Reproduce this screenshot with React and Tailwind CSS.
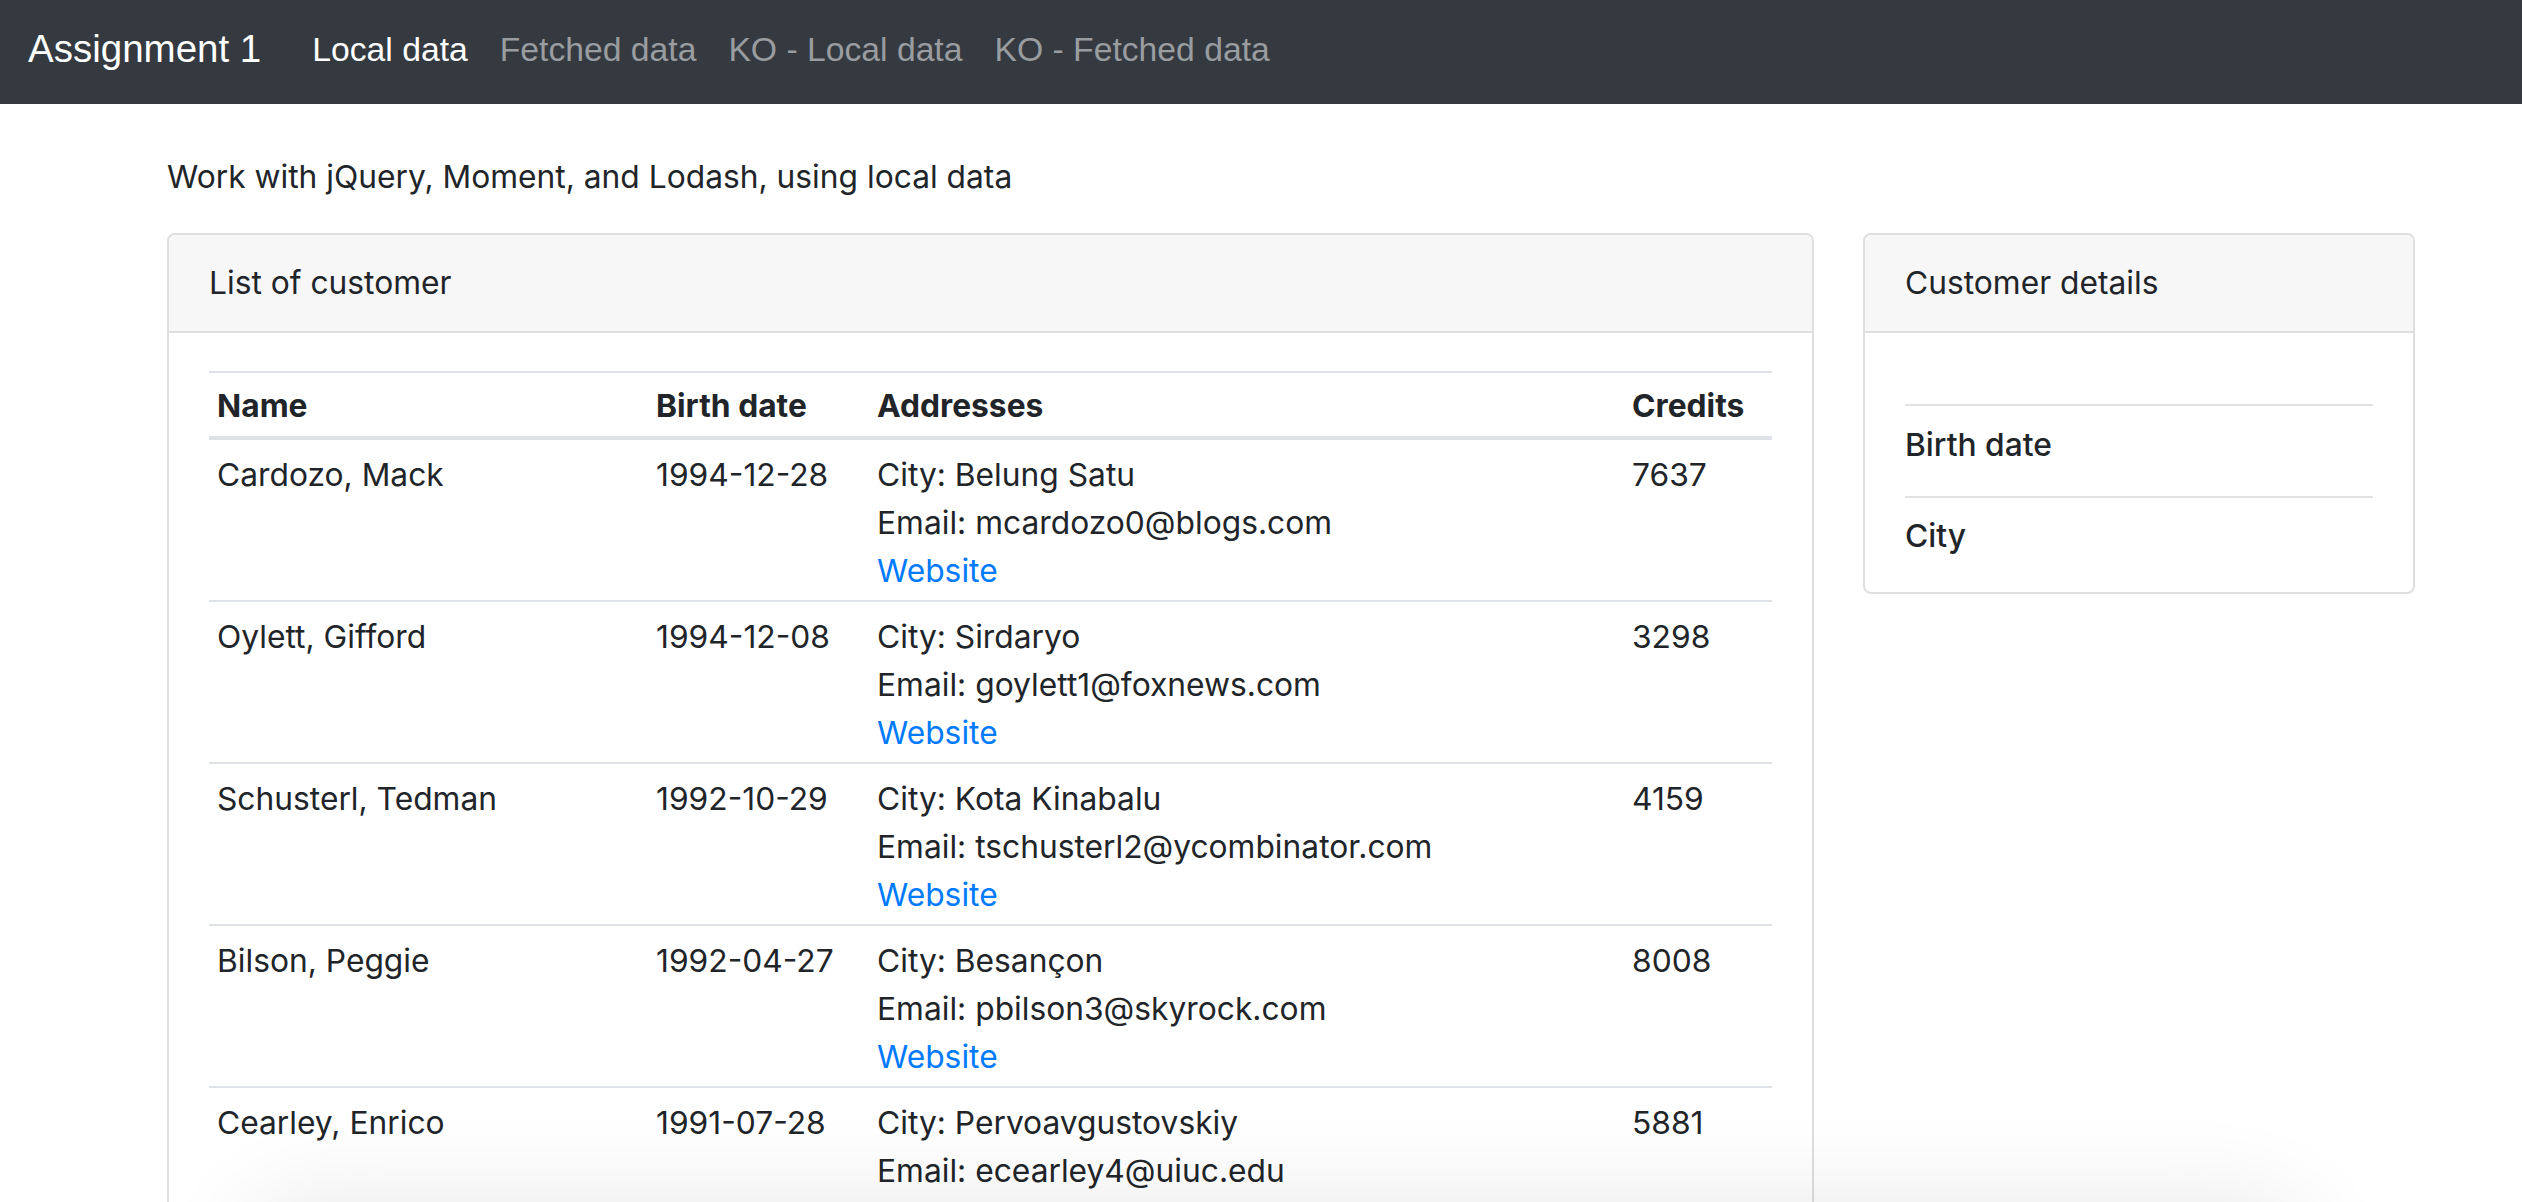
import React from 'react';

const customers = [
  { name: 'Cardozo, Mack', birth: '1994-12-28', city: 'Belung Satu', email: 'mcardozo0@blogs.com', credits: 7637 },
  { name: 'Oylett, Gifford', birth: '1994-12-08', city: 'Sirdaryo', email: 'goylett1@foxnews.com', credits: 3298 },
  { name: 'Schusterl, Tedman', birth: '1992-10-29', city: 'Kota Kinabalu', email: 'tschusterl2@ycombinator.com', credits: 4159 },
  { name: 'Bilson, Peggie', birth: '1992-04-27', city: 'Besançon', email: 'pbilson3@skyrock.com', credits: 8008 },
  { name: 'Cearley, Enrico', birth: '1991-07-28', city: 'Pervoavgustovskiy', email: 'ecearley4@uiuc.edu', credits: 5881 },
];

const navLinks = ['Local data', 'Fetched data', 'KO - Local data', 'KO - Fetched data'];

function Navbar() {
  return (
    <nav className="h-[104px] bg-[#343a40] flex items-center pl-[28px] pb-[6px] font-['Liberation_Sans',Arial,sans-serif]">
      <span className="text-white text-[38.5px] mr-[35px]">Assignment 1</span>
      {navLinks.map((l, i) => (
        <a key={l} href="#" className={(i === 0 ? 'text-white' : 'text-[#9a9da0]') + ' text-[33.7px] px-[16px]'}>
          {l}
        </a>
      ))}
    </nav>
  );
}

function CustomerTable() {
  return (
    <table className="w-full table-fixed border-collapse">
      <thead>
        <tr className="border-t-2 border-[#dee2e6]">
          <th className="w-[439px] text-left font-bold px-[8px] pt-[9px] pb-[6px] border-b-4 border-[#dee2e6]">Name</th>
          <th className="w-[221px] text-left font-bold px-[8px] pt-[9px] pb-[6px] border-b-4 border-[#dee2e6]">Birth date</th>
          <th className="w-[755px] text-left font-bold px-[8px] pt-[9px] pb-[6px] border-b-4 border-[#dee2e6]">Addresses</th>
          <th className="text-left font-bold px-[8px] pt-[9px] pb-[6px] border-b-4 border-[#dee2e6]">Credits</th>
        </tr>
      </thead>
      <tbody>
        {customers.map((c, i) => (
          <tr key={c.email} className={i === 0 ? '' : 'border-t-2 border-[#dee2e6]'}>
            <td className="align-top px-[8px] pt-[11px] pb-[5px]">{c.name}</td>
            <td className="align-top px-[8px] pt-[11px] pb-[5px]">{c.birth}</td>
            <td className="align-top px-[8px] pt-[11px] pb-[5px]">
              <div>City: {c.city}</div>
              <div>Email: {c.email}</div>
              <a href="#" className="text-[#007bff]">Website</a>
            </td>
            <td className="align-top px-[8px] pt-[11px] pb-[5px]">{c.credits}</td>
          </tr>
        ))}
      </tbody>
    </table>
  );
}

export default function App() {
  return (
    <div className="min-h-screen bg-white text-[#212529] font-['Inter',sans-serif] text-[31.75px] leading-[48px]">
      <Navbar />
      <main className="pl-[167px] pt-[49px]">
        <p className="mb-[32px]">Work with jQuery, Moment, and Lodash, using local data</p>
        <div className="flex items-start gap-[49px]">
          <section className="w-[1647px] border-2 border-[#dfdfdf] rounded-[8px] bg-white">
            <div className="bg-[#f7f7f7] border-b-2 border-[#dfdfdf] rounded-t-[6px] px-[40px] py-[24px]">List of customer</div>
            <div className="px-[40px] pt-[38px] pb-[40px]">
              <CustomerTable />
            </div>
          </section>
          <section className="w-[552px] border-2 border-[#dfdfdf] rounded-[8px] bg-white">
            <div className="bg-[#f7f7f7] border-b-2 border-[#dfdfdf] rounded-t-[6px] px-[40px] py-[24px]">Customer details</div>
            <div className="px-[40px] pt-[71px]">
              <div className="border-t-2 border-[#e2e2e2] pt-[15px] pb-[27px] font-medium">Birth date</div>
              <div className="border-t-2 border-[#e2e2e2] pt-[14px] pb-[32px] font-medium">City</div>
            </div>
          </section>
        </div>
      </main>
      <div className="fixed left-[260px] right-[230px] top-[1222px] h-[120px] rounded-[60px] bg-[rgba(0,0,0,0.08)] shadow-[0_0_90px_30px_rgba(0,0,0,0.08)] pointer-events-none" />
    </div>
  );
}
